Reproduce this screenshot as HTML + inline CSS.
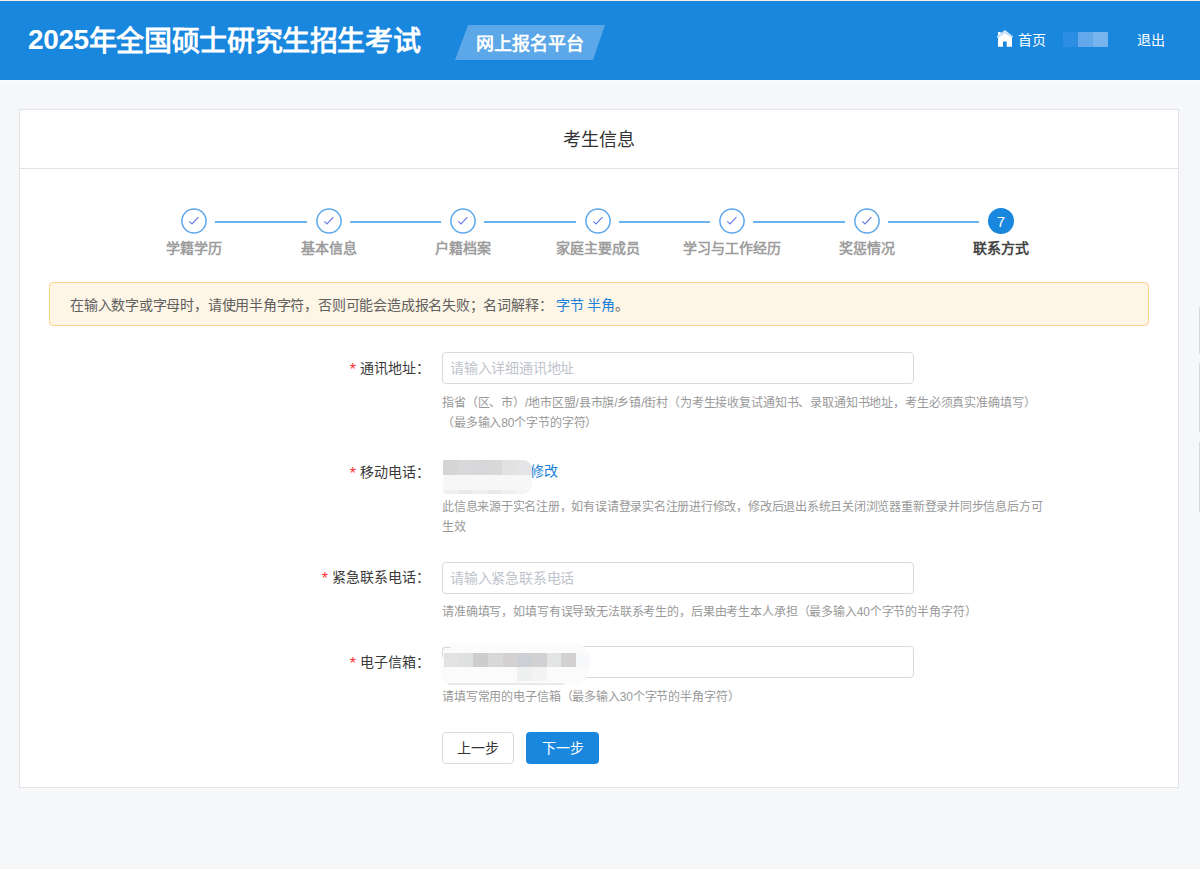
<!DOCTYPE html>
<html lang="zh-CN">
<head>
<meta charset="utf-8">
<title>考生信息</title>
<style>
*{box-sizing:border-box;margin:0;padding:0}
html,body{width:1200px;height:869px;overflow:hidden}
body{background:#f6f7f9;font-family:"Liberation Sans",sans-serif;position:relative;color:#333}
.abs{position:absolute;white-space:nowrap}
#topline{left:0;top:0;width:1200px;height:1px;background:#f6ede5}
#header{left:0;top:1px;width:1200px;height:79px;background:#1a87de}
#hline{left:0;top:80px;width:1200px;height:1px;background:#fbfbfc}
#title{left:28px;top:22px;font-size:28px;line-height:40px;font-weight:800;color:#fff;letter-spacing:-0.37px}
#badge{left:455px;top:25px;width:150px;height:35px}
#badgetxt{left:476px;top:31px;font-size:18px;line-height:26px;font-weight:800;color:#fff}
#home{left:997px;top:30px;width:16px;height:17px}
#hometxt{left:1018px;top:30px;font-size:14px;line-height:20px;color:#fff}
.red1{left:1063px;top:32px;width:15px;height:15px;background:#2b8ee2}
.red2{left:1078px;top:32px;width:15px;height:15px;background:#63a8ea}
.red3{left:1093px;top:32px;width:15px;height:15px;background:#77b4ee}
#logout{left:1137px;top:30px;font-size:14px;line-height:20px;color:#fff}

#card{left:19px;top:109px;width:1160px;height:679px;background:#fff;border:1px solid #e1e3e7}
#cardhead{left:20px;top:168px;width:1158px;height:1px;background:#e1e3e7}
#cardtitle{left:19px;top:127px;width:1160px;text-align:center;font-size:18px;line-height:26px;color:#333}

.circ{position:absolute;top:208px;width:26px;height:26px;border-radius:50%;border:1.5px solid #5aa6ea;background:#fff}
.circ svg{position:absolute;left:0;top:0}
.cur{background:#1a87de;border-color:#1a87de;color:#fff;font-size:14px;line-height:23px;text-align:center;font-weight:bold}
.sline{position:absolute;top:221px;height:2px;background:#6cb3ee}
.slabel{position:absolute;top:238px;width:140px;text-align:center;font-size:14px;line-height:20px;font-weight:bold;color:#9d9d9d}
.slabel.on{color:#444}

#warn{left:49px;top:282px;width:1100px;height:44px;background:#fdf5e5;border:1px solid #fbd38d;border-radius:4px}
#warntxt{left:70px;top:295px;font-size:14px;line-height:20px;color:#606060;letter-spacing:-0.22px}
#warntxt span{color:#1a7fd8}

.lbl{position:absolute;right:770px;font-size:14px;line-height:20px;color:#3a3a3a;text-align:right;white-space:nowrap}
.lbl i{font-style:normal;color:#f33;margin-right:4px;font-size:16px;position:relative;top:2px}
.inp{position:absolute;left:442px;width:472px;height:32px;border:1px solid #d8dadf;border-radius:4px;background:#fff}
.ph{position:absolute;left:450px;font-size:14px;line-height:20px;color:#c0c4cc;white-space:nowrap;letter-spacing:-0.2px}
.hint{position:absolute;left:442px;font-size:12px;line-height:20px;color:#999;white-space:nowrap;letter-spacing:-0.15px}

.btn{position:absolute;top:732px;height:32px;border-radius:4px;font-size:14px;line-height:30px;text-align:center}
#prev{left:442px;width:72px;border:1px solid #d8dadf;background:#fff;color:#333}
#next{left:526px;width:73px;background:#1a87de;color:#fff;line-height:32px}

.rs{position:absolute;left:1199px;width:1px;background:#d8d9dc}
.blk{position:absolute}
</style>
</head>
<body>
<div class="abs" id="topline"></div>
<div class="abs" id="header"></div>
<div class="abs" id="hline"></div>
<div class="abs" id="title"><span style="position:relative;top:-2px">2025</span>年全国硕士研究生招生考试</div>
<svg class="abs" id="badge" viewBox="0 0 150 35"><polygon points="13,0 150,0 138,35 0,35" fill="#5ba7e8"/></svg>
<div class="abs" id="badgetxt">网上报名平台</div>
<svg class="abs" style="left:994px;top:27px" width="22" height="22" viewBox="0 0 22 22"><path d="M4 10.8 L10.9 5.6 L18 10.8 L18 19.8 L12.7 19.8 L12.7 14.4 L9 14.4 L9 19.8 L4 19.8 Z" fill="#fff"/><rect x="4.1" y="5" width="2.7" height="3.8" fill="#fff"/><path d="M3.2 10.2 L10.9 4.2 L18.6 10.2" fill="none" stroke="#cfe5f8" stroke-width="1.9" stroke-linejoin="miter"/></svg>
<div class="abs" id="hometxt">首页</div>
<div class="abs red1"></div><div class="abs red2"></div><div class="abs red3"></div>
<div class="abs" id="logout">退出</div>

<div class="abs" id="card"></div>
<div class="abs" id="cardhead"></div>
<div class="abs" id="cardtitle">考生信息</div>

<!-- steps -->
<svg class="abs" style="left:179px;top:206.2px" width="30" height="30" viewBox="0 0 30 30"><circle cx="15" cy="15" r="12.1" fill="#fff" stroke="#5ea8eb" stroke-width="1.5"/><path d="M10.3 15.4 L13 17.9 L19.4 11.2" fill="none" stroke="#6b7de4" stroke-width="1.2"/></svg>
<div class="slabel" style="left:124px">学籍学历</div>
<div class="sline" style="left:215px;width:91.5px"></div>
<svg class="abs" style="left:313.5px;top:206.2px" width="30" height="30" viewBox="0 0 30 30"><circle cx="15" cy="15" r="12.1" fill="#fff" stroke="#5ea8eb" stroke-width="1.5"/><path d="M10.3 15.4 L13 17.9 L19.4 11.2" fill="none" stroke="#6b7de4" stroke-width="1.2"/></svg>
<div class="slabel" style="left:258.5px">基本信息</div>
<div class="sline" style="left:349.5px;width:91.5px"></div>
<svg class="abs" style="left:448px;top:206.2px" width="30" height="30" viewBox="0 0 30 30"><circle cx="15" cy="15" r="12.1" fill="#fff" stroke="#5ea8eb" stroke-width="1.5"/><path d="M10.3 15.4 L13 17.9 L19.4 11.2" fill="none" stroke="#6b7de4" stroke-width="1.2"/></svg>
<div class="slabel" style="left:393px">户籍档案</div>
<div class="sline" style="left:484px;width:91.5px"></div>
<svg class="abs" style="left:582.5px;top:206.2px" width="30" height="30" viewBox="0 0 30 30"><circle cx="15" cy="15" r="12.1" fill="#fff" stroke="#5ea8eb" stroke-width="1.5"/><path d="M10.3 15.4 L13 17.9 L19.4 11.2" fill="none" stroke="#6b7de4" stroke-width="1.2"/></svg>
<div class="slabel" style="left:527.5px">家庭主要成员</div>
<div class="sline" style="left:618.5px;width:91.5px"></div>
<svg class="abs" style="left:717px;top:206.2px" width="30" height="30" viewBox="0 0 30 30"><circle cx="15" cy="15" r="12.1" fill="#fff" stroke="#5ea8eb" stroke-width="1.5"/><path d="M10.3 15.4 L13 17.9 L19.4 11.2" fill="none" stroke="#6b7de4" stroke-width="1.2"/></svg>
<div class="slabel" style="left:662px">学习与工作经历</div>
<div class="sline" style="left:753px;width:91.5px"></div>
<svg class="abs" style="left:851.5px;top:206.2px" width="30" height="30" viewBox="0 0 30 30"><circle cx="15" cy="15" r="12.1" fill="#fff" stroke="#5ea8eb" stroke-width="1.5"/><path d="M10.3 15.4 L13 17.9 L19.4 11.2" fill="none" stroke="#6b7de4" stroke-width="1.2"/></svg>
<div class="slabel" style="left:796.5px">奖惩情况</div>
<div class="sline" style="left:887.5px;width:91.5px"></div>
<svg class="abs" style="left:986px;top:206.2px" width="30" height="30" viewBox="0 0 30 30"><circle cx="15" cy="15" r="13" fill="#1a87de"/></svg>
<div class="abs" style="left:991px;top:211.2px;width:20px;text-align:center;font-size:15px;line-height:22px;color:#fff">7</div>
<div class="slabel on" style="left:931px">联系方式</div>

<div class="abs" id="warn"></div>
<div class="abs" id="warntxt">在输入数字或字母时，请使用半角字符，否则可能会造成报名失败；名词解释：&nbsp;<span>字节 半角</span>。</div>

<!-- row 1 -->
<div class="lbl" style="top:358px"><i>*</i>通讯地址：</div>
<div class="inp" style="top:352px"></div>
<div class="ph" style="top:358px">请输入详细通讯地址</div>
<div class="hint" style="top:393px">指省（区、市）/地市区盟/县市旗/乡镇/街村（为考生接收复试通知书、录取通知书地址，考生必须真实准确填写）</div>
<div class="hint" style="top:413px">（最多输入80个字节的字符）</div>

<!-- row 2 -->
<div class="lbl" style="top:462px"><i>*</i>移动电话：</div>
<!-- phone redaction -->
<div class="abs" id="xiugai" style="left:530px;top:461px;font-size:14px;line-height:20px;color:#1a7fd8">修改</div>
<div class="blk" style="left:443px;top:460px;width:89px;height:34px;border-radius:0 9px 11px 3px;overflow:hidden;background:#f7f7f8">
<div class="blk" style="left:0;top:0;width:15px;height:15px;background:#d6d5d5"></div>
<div class="blk" style="left:15px;top:0;width:15px;height:15px;background:#d9d9dc"></div>
<div class="blk" style="left:30px;top:0;width:15px;height:15px;background:#d7d6d9"></div>
<div class="blk" style="left:45px;top:0;width:14px;height:15px;background:#d8d8d9"></div>
<div class="blk" style="left:59px;top:0;width:15px;height:15px;background:#e2e2e2"></div>
<div class="blk" style="left:74px;top:0;width:15px;height:15px;background:#e4e4e6"></div>
<div class="blk" style="left:0;top:30px;width:15px;height:4px;background:#eeeff0"></div>
<div class="blk" style="left:15px;top:30px;width:15px;height:4px;background:#e9eaec"></div>
<div class="blk" style="left:30px;top:30px;width:15px;height:4px;background:#eeeff0"></div>
<div class="blk" style="left:45px;top:30px;width:14px;height:4px;background:#e9e9eb"></div>
<div class="blk" style="left:59px;top:30px;width:15px;height:4px;background:#f0f0f0"></div>
<div class="blk" style="left:74px;top:30px;width:15px;height:4px;background:#f5f5f5"></div>
</div>
<div class="hint" style="top:497px;letter-spacing:-0.23px">此信息来源于实名注册，如有误请登录实名注册进行修改，修改后退出系统且关闭浏览器重新登录并同步信息后方可</div>
<div class="hint" style="top:517px">生效</div>

<!-- row 3 -->
<div class="lbl" style="top:567px"><i>*</i>紧急联系电话：</div>
<div class="inp" style="top:562px"></div>
<div class="ph" style="top:568px">请输入紧急联系电话</div>
<div class="hint" style="top:602px">请准确填写，如填写有误导致无法联系考生的，后果由考生本人承担（最多输入40个字节的半角字符）</div>

<!-- row 4 -->
<div class="lbl" style="top:652px"><i>*</i>电子信箱：</div>
<div class="inp" style="top:646px"></div>
<!-- email redaction -->
<div class="blk" style="left:441px;top:643px;width:147px;height:42px;border-radius:12px 14px 14px 10px;background:#fbfbfb"></div>
<div class="blk" style="left:448px;top:683px;width:116px;height:2px;border-radius:1px;background:#e8e9eb"></div>
<div class="blk" style="left:442px;top:647px;width:8px;height:10px;border-left:1px solid #d6d8de;border-top:1px solid #d6d8de;border-radius:4px 0 0 0"></div>
<div class="blk" style="left:444px;top:653px;width:14px;height:14px;background:#e3e3e3"></div>
<div class="blk" style="left:458px;top:653px;width:15px;height:14px;background:#dfe1e0"></div>
<div class="blk" style="left:473px;top:653px;width:15px;height:14px;background:#cdcdcd"></div>
<div class="blk" style="left:488px;top:653px;width:15px;height:14px;background:#d8d8d8"></div>
<div class="blk" style="left:503px;top:653px;width:14px;height:14px;background:#d3d1d1"></div>
<div class="blk" style="left:517px;top:653px;width:15px;height:14px;background:#ccd0d5"></div>
<div class="blk" style="left:532px;top:653px;width:15px;height:14px;background:#d1d0d3"></div>
<div class="blk" style="left:547px;top:653px;width:14px;height:14px;background:#e3e4e4"></div>
<div class="blk" style="left:561px;top:653px;width:15px;height:14px;background:#d3d1d2"></div>
<div class="blk" style="left:576px;top:653px;width:14px;height:14px;background:#f8f9fc"></div>
<div class="blk" style="left:517px;top:667px;width:15px;height:14px;background:#eef0f0"></div>
<div class="blk" style="left:532px;top:667px;width:15px;height:14px;background:#f3f3f4"></div>
<div class="hint" style="top:687px">请填写常用的电子信箱（最多输入30个字节的半角字符）</div>

<div class="btn" id="prev">上一步</div>
<div class="btn" id="next">下一步</div>

<div class="rs" style="top:307px;height:47px"></div>
<div class="rs" style="top:363px;height:69px"></div>
<div class="rs" style="top:442px;height:70px"></div>
</body>
</html>
